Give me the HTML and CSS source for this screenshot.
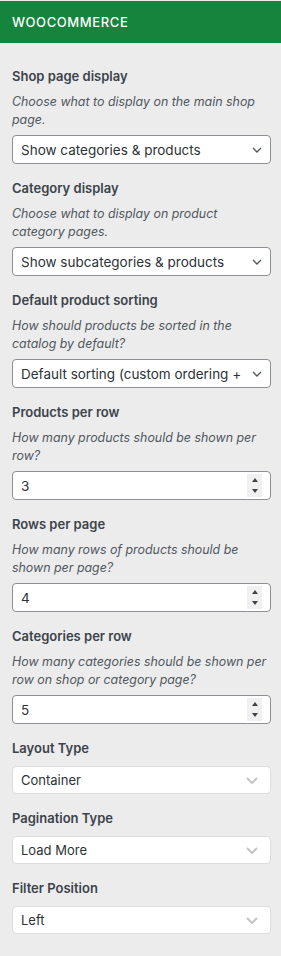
FILE: index.html
```html
<!DOCTYPE html>
<html>
<head>
	<meta charset="utf-8">
	<meta name="viewport" content="width=device-width, initial-scale=1">
	<title>WooCommerce settings</title>
	<link rel="stylesheet" href="styles.css">
</head>
<body>

	<div class="panel">
		<div class="panel-head">WOOCOMMERCE</div>

		<div class="controls">

			<div class="control">
				<span class="control-title">Shop page display</span>
				<span class="description">Choose what to display on the main shop page.</span>
				<div class="select">
					<span class="select-value">Show categories &amp; products</span>
					<svg class="caret" width="10" height="6" viewBox="0 0 10 6"><polyline points="1,1 5,5 9,1"/></svg>
				</div>
			</div>

			<div class="control">
				<span class="control-title">Category display</span>
				<span class="description">Choose what to display on product category pages.</span>
				<div class="select">
					<span class="select-value">Show subcategories &amp; products</span>
					<svg class="caret" width="10" height="6" viewBox="0 0 10 6"><polyline points="1,1 5,5 9,1"/></svg>
				</div>
			</div>

			<div class="control">
				<span class="control-title">Default product sorting</span>
				<span class="description">How should products be sorted in the catalog by default?</span>
				<div class="select">
					<span class="select-value">Default sorting (custom ordering +</span>
					<svg class="caret" width="10" height="6" viewBox="0 0 10 6"><polyline points="1,1 5,5 9,1"/></svg>
				</div>
			</div>

			<div class="control">
				<span class="control-title">Products per row</span>
				<span class="description">How many products should be shown per row?</span>
				<div class="number">
					<span class="number-value">3</span>
					<span class="spin"><i class="spin-up"></i><i class="spin-down"></i></span>
				</div>
			</div>

			<div class="control">
				<span class="control-title">Rows per page</span>
				<span class="description">How many rows of products should be shown per page?</span>
				<div class="number">
					<span class="number-value">4</span>
					<span class="spin"><i class="spin-up"></i><i class="spin-down"></i></span>
				</div>
			</div>

			<div class="control">
				<span class="control-title">Categories per row</span>
				<span class="description">How many categories should be shown per row on shop or category page?</span>
				<div class="number">
					<span class="number-value">5</span>
					<span class="spin"><i class="spin-up"></i><i class="spin-down"></i></span>
				</div>
			</div>

			<div class="control control-compact">
				<span class="control-title">Layout Type</span>
				<div class="select select-soft">
					<span class="select-value">Container</span>
					<svg class="caret" width="12" height="7" viewBox="0 0 12 7"><polyline points="1,1 6,6 11,1"/></svg>
				</div>
			</div>

			<div class="control control-compact">
				<span class="control-title">Pagination Type</span>
				<div class="select select-soft">
					<span class="select-value">Load More</span>
					<svg class="caret" width="12" height="7" viewBox="0 0 12 7"><polyline points="1,1 6,6 11,1"/></svg>
				</div>
			</div>

			<div class="control control-compact">
				<span class="control-title">Filter Position</span>
				<div class="select select-soft">
					<span class="select-value">Left</span>
					<svg class="caret" width="12" height="7" viewBox="0 0 12 7"><polyline points="1,1 6,6 11,1"/></svg>
				</div>
			</div>

		</div>
	</div>

</body>
</html>
```

FILE: styles.css
```css
body{
	margin: 0;
	background: #ececec;
	font-family: Inter, "Liberation Sans", sans-serif;
}
.panel-head{
	margin-top: 1px;
	height: 42px;
	display: flex;
	align-items: center;
	padding-left: 12px;
	background: #15843d;
	color: #fff;
	font-size: 13px;
	font-weight: 500;
	letter-spacing: 0.6px;
}
.controls{
	padding: 23px 10px 22px 12px;
}
.control{
	margin-bottom: 14px;
}
.control-title{
	display: block;
	font-size: 13px;
	font-weight: 600;
	line-height: 20px;
	color: #3c434a;
	margin-bottom: 7px;
}
.control-compact .control-title{
	margin-bottom: 8px;
}
.description{
	display: block;
	font-size: 12.4px;
	font-style: italic;
	line-height: 18px;
	color: #50575e;
	margin-bottom: 6px;
}
.select, .number{
	display: flex;
	align-items: center;
	box-sizing: border-box;
	height: 29px;
	padding: 0 8px;
	border: 1px solid #8c8f94;
	border-radius: 4px;
	background: #fff;
	font-size: 13.5px;
	color: #2c3338;
}
.select-value, .number-value{
	flex: 1;
	min-width: 0;
	white-space: nowrap;
	overflow: hidden;
}
.caret{
	flex: none;
	margin-left: 6px;
	fill: none;
	stroke: #50575e;
	stroke-width: 1.3;
}
.select-soft{
	height: 28px;
	border-color: #dcdcde;
	padding-right: 12px;
	font-size: 13px;
}
.select-soft .caret{
	stroke: #c3c4c7;
	stroke-width: 2;
}
.number{
	padding: 2px 8px;
	align-items: stretch;
}
.number-value{
	align-self: center;
}
.spin{
	width: 15px;
	display: flex;
	flex-direction: column;
	justify-content: space-around;
	align-items: center;
	background: #f0f0f1;
}
.spin-up{
	border-left: 3px solid transparent;
	border-right: 3px solid transparent;
	border-bottom: 4px solid #3c434a;
}
.spin-down{
	border-left: 3px solid transparent;
	border-right: 3px solid transparent;
	border-top: 4px solid #3c434a;
}
```
